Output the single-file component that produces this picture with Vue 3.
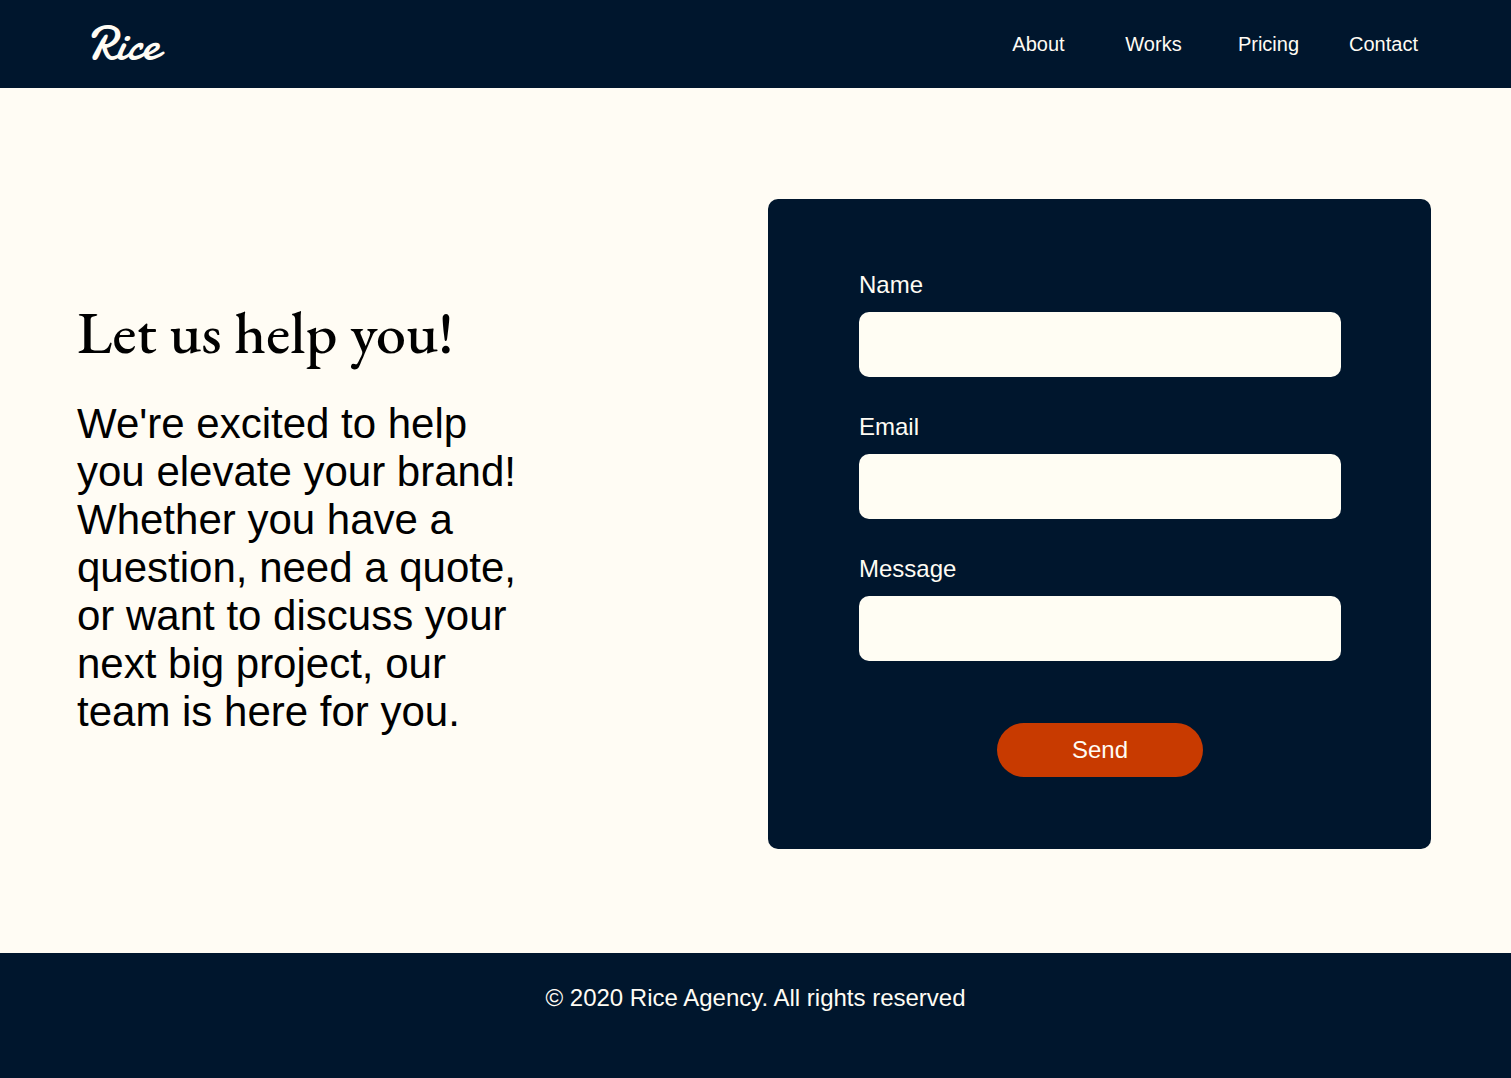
<script setup>
import { reactive } from 'vue'

const links = ['About', 'Works', 'Pricing', 'Contact']
const fields = [
  { id: 'name', label: 'Name', type: 'text' },
  { id: 'email', label: 'Email', type: 'email' },
  { id: 'message', label: 'Message', type: 'text' },
]
const form = reactive({ name: '', email: '', message: '' })
</script>

<template>
  <div class="page">
    <header class="header">
      <a class="logo" href="#">Rice</a>
      <nav class="nav">
        <a v-for="link in links" :key="link" :href="'#' + link.toLowerCase()">{{ link }}</a>
      </nav>
    </header>

    <main class="main">
      <section class="intro">
        <h1>Let us help you!</h1>
        <p>
          We're excited to help you elevate your brand! Whether you have a question, need a quote,
          or want to discuss your next big project, our team is here for you.
        </p>
      </section>

      <form class="card" @submit.prevent>
        <div v-for="field in fields" :key="field.id" class="field">
          <label :for="field.id">{{ field.label }}</label>
          <input :id="field.id" v-model="form[field.id]" :type="field.type" />
        </div>
        <button class="send" type="submit">Send</button>
      </form>
    </main>

    <footer class="footer">© 2020 Rice Agency. All rights reserved</footer>
  </div>
</template>

<style>
body {
  margin: 0;
  background: #fffcf4;
}
</style>

<style scoped>
.page {
  display: flex;
  flex-direction: column;
  min-height: 100vh;
  background: #fffcf4;
  color: #000;
  font-family: "Liberation Sans", Arial, sans-serif;
}

.header {
  display: flex;
  align-items: center;
  justify-content: space-between;
  padding: 0 70px 0 88px;
  background: #00162d;
}

.logo {
  color: #fffcf4;
  font-family: "Damion", "Dancing Script", Lato, cursive;
  font-size: 48px;
  font-weight: 400;
  line-height: 88px;
  text-decoration: none;
}

.nav {
  display: grid;
  grid-template-columns: repeat(4, 115px);
}

.nav a {
  color: #fffcf4;
  font-size: 20px;
  line-height: 24px;
  text-align: center;
  text-decoration: none;
}

.main {
  display: flex;
  flex: 1;
  align-items: center;
  justify-content: space-between;
  gap: 80px;
  padding: 111px 80px 104px 77px;
}

.intro {
  max-width: 448px;
  padding-bottom: 16px;
}

.intro h1 {
  margin: 0 0 32px;
  font-family: "EB Garamond", "Liberation Serif", serif;
  font-size: 60px;
  font-weight: 500;
  line-height: 72px;
  white-space: nowrap;
}

.intro p {
  margin: 0;
  font-size: 42px;
  line-height: 48px;
}

.card {
  display: flex;
  flex: 0 1 663px;
  flex-direction: column;
  gap: 36px;
  box-sizing: border-box;
  padding: 72px 90px 72px 91px;
  border-radius: 10px;
  background: #00162d;
  color: #fffcf4;
}

.field {
  display: flex;
  flex-direction: column;
  gap: 13px;
}

.field label {
  font-size: 24px;
  line-height: 28px;
}

.field input {
  box-sizing: border-box;
  width: 100%;
  height: 65px;
  padding: 0 20px;
  border: 0;
  border-radius: 10px;
  background: #fffdf3;
  color: #00162d;
  font: inherit;
  font-size: 24px;
}

.send {
  align-self: center;
  width: 206px;
  height: 54px;
  margin-top: 26px;
  padding: 0;
  border: 0;
  border-radius: 27px;
  background: #c83a00;
  color: #fffcf4;
  font: inherit;
  font-size: 24px;
  cursor: pointer;
}

.footer {
  padding: 31px 0 66px;
  background: #00162d;
  color: #fffcf4;
  font-size: 24px;
  line-height: 28px;
  text-align: center;
}
</style>
